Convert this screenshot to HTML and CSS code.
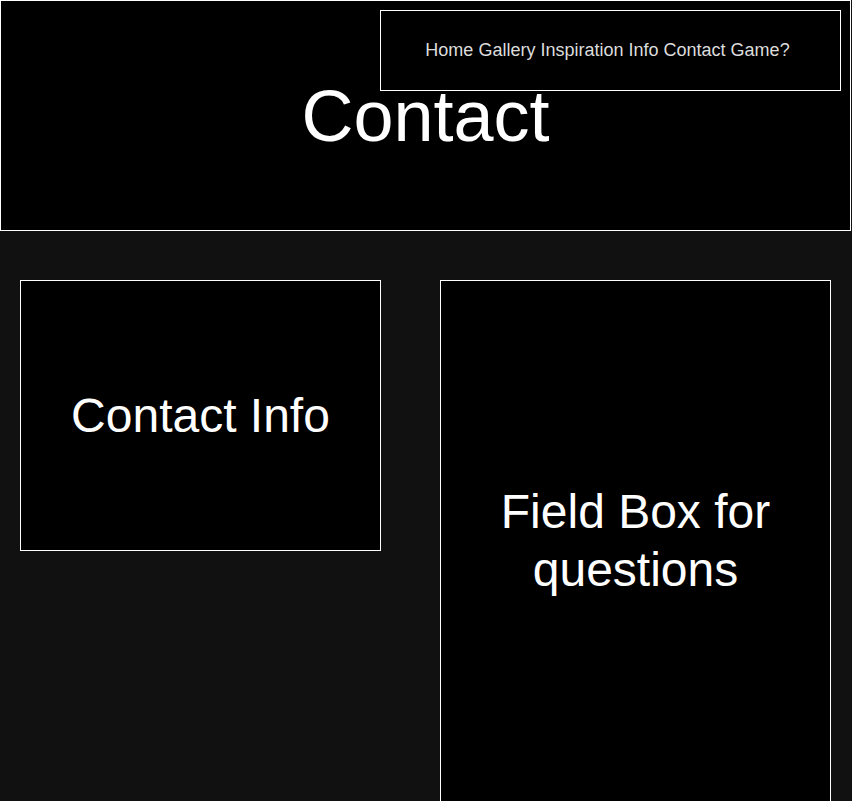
FILE: index.html
```html
<!DOCTYPE html>
<html lang="en">
<head>
    <meta charset="UTF-8">
    <meta name="viewport" content="width=device-width, initial-scale=1.0">
    <title>Contact</title>
    <link rel="stylesheet" href="styles.css">
</head>
<body>

<header class="top">
    <h1>Contact</h1>
    <nav class="nav">
        <a href="#">Home</a>
        <a href="#">Gallery</a>
        <a href="#">Inspiration</a>
        <a href="#">Info</a>
        <a href="#">Contact</a>
        <a href="#">Game?</a>
    </nav>
</header>

<div class="content">
    <div class="box info">
        <p>Contact Info</p>
    </div>
    <div class="box questions">
        <p>Field Box for questions</p>
    </div>
</div>

</body>
</html>
```

FILE: styles.css
```css
body {
    margin: 0;
    background-color: #111;
    color: white;
    font-family: "Liberation Sans", Arial, sans-serif;
}
.top {
    position: relative;
    width: 849px;
    height: 229px;
    border: 1px solid white;
    background-color: black;
    display: flex;
    align-items: center;
    justify-content: center;
}
.top h1 {
    margin: 0;
    font-size: 72px;
    font-weight: normal;
}
.nav {
    position: absolute;
    top: 9px;
    left: 379px;
    width: 453px;
    height: 79px;
    padding-right: 6px;
    border: 1px solid white;
    background-color: black;
    line-height: 79px;
    text-align: center;
    font-size: 18px;
}
.nav a {
    color: #ddd;
    text-decoration: none;
}
.content {
    display: flex;
    align-items: flex-start;
    gap: 59px;
    padding: 49px 20px 0 20px;
}
.box {
    border: 1px solid white;
    background-color: black;
    display: flex;
    align-items: center;
    justify-content: center;
    text-align: center;
    font-size: 48px;
}
.box p {
    margin: 0;
}
.info {
    width: 359px;
    height: 269px;
}
.questions {
    width: 389px;
    height: 520px;
}
.questions p {
    width: 300px;
    line-height: 58px;
}
```
